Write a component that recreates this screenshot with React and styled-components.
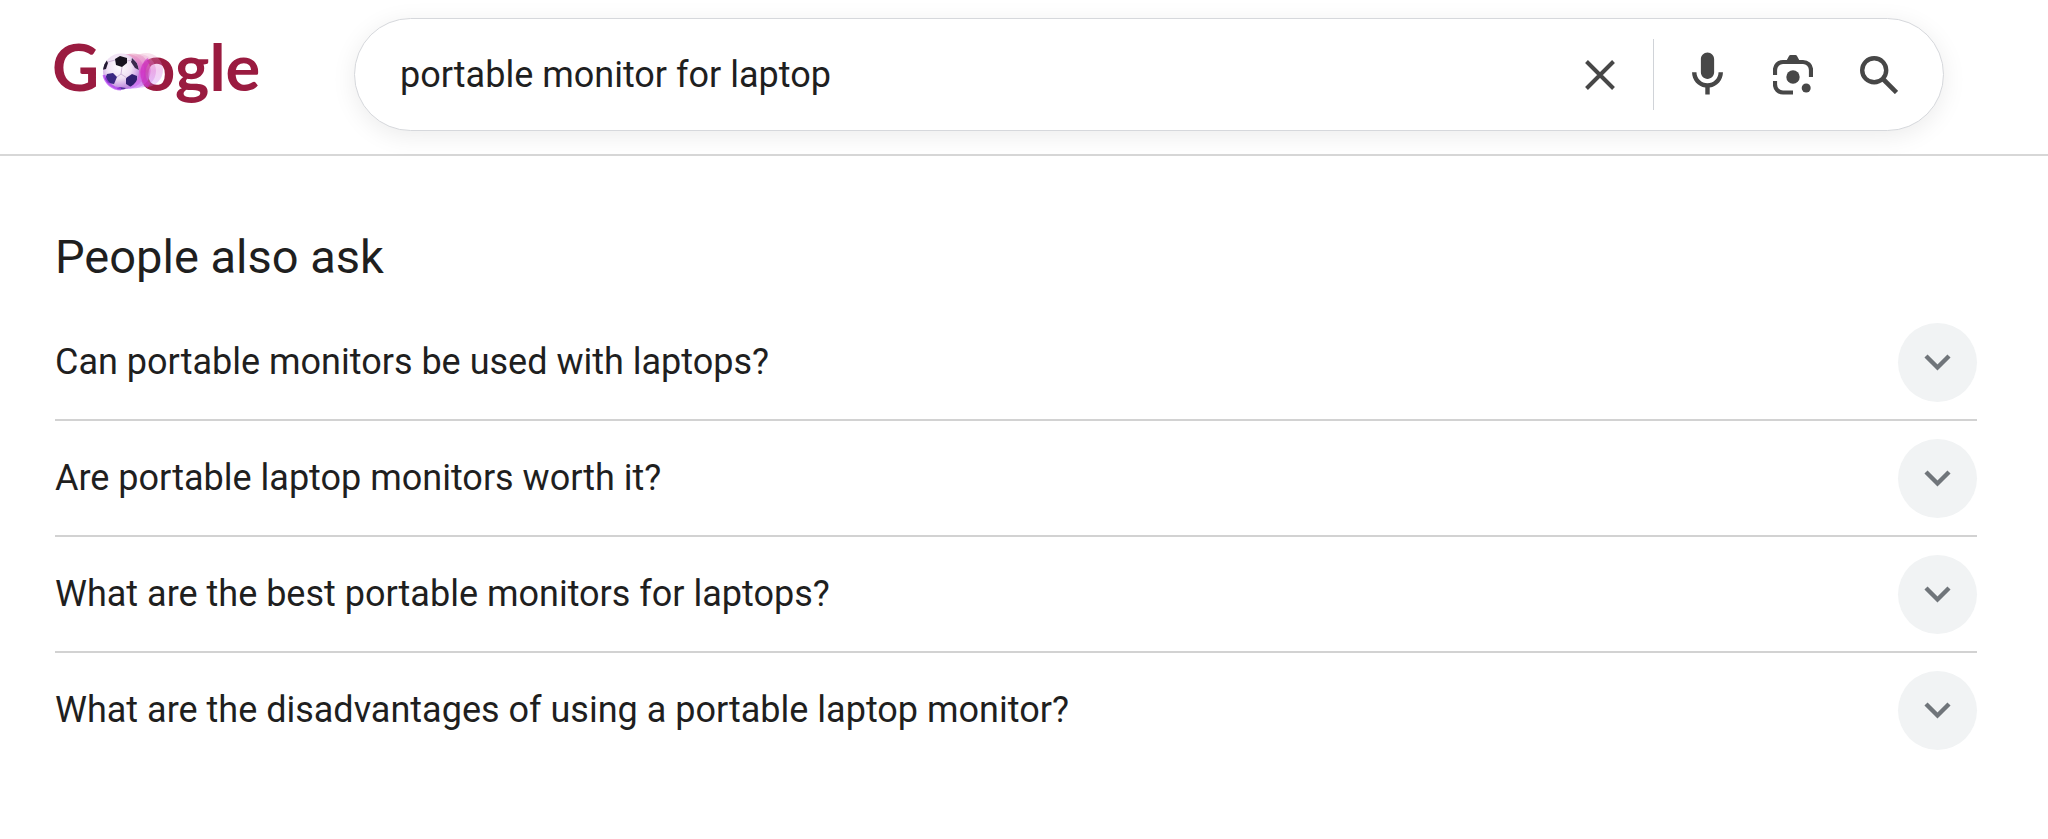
import React, { useRef, useState } from "react";
import styled, { createGlobalStyle } from "styled-components";

const GlobalStyle = createGlobalStyle`
  * {
    box-sizing: border-box;
  }
  body {
    margin: 0;
    background: #fff;
    color: #1f1f1f;
    font-family: Roboto, "Liberation Sans", sans-serif;
  }
`;

const Header = styled.header`
  display: flex;
  align-items: center;
  gap: 91px;
  padding: 18px 104px 23px 51px;
  border-bottom: 2px solid #d7d7d7;
`;

const LogoLink = styled.a`
  display: flex;
  flex: none;
`;

const LogoLetters = styled.text`
  fill: #9a1b40;
  font-family: Lato, sans-serif;
  font-size: 65px;
  font-weight: 700;
`;

const SearchForm = styled.form`
  flex: 1;
  min-width: 0;
  height: 113px;
  display: flex;
  align-items: center;
  padding: 0 21px 0 45px;
  border: 1px solid #d6d8dc;
  border-radius: 57px;
  background: #fff;
  box-shadow: 0 5px 25px rgba(0, 0, 0, 0.08);
`;

const SearchInput = styled.input`
  flex: 1;
  min-width: 0;
  padding: 0;
  border: 0;
  outline: 0;
  background: transparent;
  color: #1f1f1f;
  font-family: inherit;
  font-size: 36px;
  line-height: 48px;
`;

const IconButton = styled.button`
  flex: none;
  width: 86px;
  height: 86px;
  display: flex;
  align-items: center;
  justify-content: center;
  padding: 0;
  border: 0;
  background: transparent;
  color: #474747;
  cursor: pointer;
`;

const Divider = styled.span`
  flex: none;
  width: 1px;
  height: 71px;
  margin: 0 10px;
  background: #d0d3d8;
`;

const Main = styled.main`
  padding: 73px 71px 72px 55px;
`;

const Title = styled.h2`
  margin: 0 0 20px;
  font-size: 47px;
  font-weight: 400;
  line-height: 56px;
`;

const QuestionList = styled.ul`
  margin: 0;
  padding: 0;
  list-style: none;
`;

const QuestionItem = styled.li`
  border-bottom: 2px solid #d2d2d2;

  &:last-child {
    border-bottom: 0;
  }
`;

const QuestionButton = styled.button`
  width: 100%;
  min-height: 114px;
  display: flex;
  align-items: center;
  justify-content: space-between;
  gap: 24px;
  padding: 0;
  border: 0;
  background: transparent;
  color: inherit;
  font-family: inherit;
  font-size: 36px;
  line-height: 48px;
  text-align: left;
  cursor: pointer;
`;

const Chevron = styled.span`
  flex: none;
  width: 79px;
  height: 79px;
  display: flex;
  align-items: center;
  justify-content: center;
  border-radius: 50%;
  background: #f1f3f4;
  color: #70757a;
  transform: ${({ $open }) => ($open ? "rotate(180deg)" : "none")};
`;

const questions = [
  "Can portable monitors be used with laptops?",
  "Are portable laptop monitors worth it?",
  "What are the best portable monitors for laptops?",
  "What are the disadvantages of using a portable laptop monitor?",
];

const Logo = () => (
  <svg width="212" height="98" viewBox="-4 -14 212 98" aria-hidden="true">
    <defs>
      <radialGradient id="ball" cx="0.45" cy="0.35" r="0.7">
        <stop offset="0" stopColor="#fff" />
        <stop offset="0.5" stopColor="#efe0f3" />
        <stop offset="1" stopColor="#b070d8" />
      </radialGradient>
      <linearGradient id="trail" x1="0" y1="0" x2="0" y2="1">
        <stop offset="0" stopColor="#eba6c4" />
        <stop offset="0.5" stopColor="#d65ad0" />
        <stop offset="1" stopColor="#c67cfa" />
      </linearGradient>
      <clipPath id="ballClip">
        <circle cx="66" cy="31.500" r="18" />
      </clipPath>
    </defs>
    <LogoLetters x="-3" y="51">G</LogoLetters>
    <LogoLetters x="83" y="51">ogle</LogoLetters>
    <circle cx="91" cy="30" r="17" fill="url(#trail)" opacity="0.3" />
    <circle cx="84" cy="31" r="17" fill="url(#trail)" opacity="0.3" />
    <circle cx="78" cy="31" r="17.500" fill="url(#trail)" opacity="0.6" />
    <circle cx="72" cy="31.500" r="17.500" fill="url(#trail)" opacity="0.8" />
    <path d="M94 20a17 17 0 0 0 0 26" stroke="#cf28c4" strokeWidth="5" fill="none" opacity="0.6" />
    <circle cx="66" cy="31.500" r="18" fill="url(#ball)" />
    <g clipPath="url(#ballClip)">
      <path d="M60 19l5-3 7 2 0 5-5 4-6-2z" fill="#17131f" />
      <path d="M77 18l5 5 2 7-4-2-4-6z" fill="#3b2a4d" />
      <path d="M47 24l4-5 2 4-2 6-4 1z" fill="#241b33" />
      <path d="M52 34l6-1 4 4-3 7-6-1-3-4z" fill="#3b2882" />
      <path d="M71 38l6-4 5 2 0 7-6 4-5-3z" fill="#30206f" />
      <path d="M60 49l5-2 6 1-4 3z" fill="#53309c" />
      <path
        d="M53 22l7-2M67 27l-1 7M72 21l5-1M66 34l-4 3M66 34l6 4M59 44l3 5"
        stroke="#cdb4d8"
        fill="none"
      />
    </g>
    <path
      d="M49 35a17.500 17.500 0 0 0 17 14"
      stroke="#b43cf2"
      strokeWidth="3"
      fill="none"
      opacity="0.7"
    />
  </svg>
);

const CloseIcon = () => (
  <svg width="32" height="32" viewBox="0 0 32 32" aria-hidden="true">
    <path d="M2.500 2.500l27 27M29.500 2.500l-27 27" stroke="currentColor" strokeWidth="4" />
  </svg>
);

const MicIcon = () => (
  <svg width="53" height="53" viewBox="0 0 24 24" fill="currentColor" aria-hidden="true">
    <path d="M12 14c1.660 0 3-1.340 3-3V5c0-1.660-1.340-3-3-3S9 3.340 9 5v6c0 1.660 1.340 3 3 3zm5-3c0 2.760-2.240 5-5 5s-5-2.240-5-5H5c0 3.530 2.610 6.430 6 6.920V21h2v-3.080c3.390-.49 6-3.390 6-6.920h-2z" />
  </svg>
);

const LensIcon = () => (
  <svg width="40" height="40" viewBox="0 0 40 40" aria-hidden="true">
    <path
      d="M2 20v-5a8 8 0 0 1 8-8h20a8 8 0 0 1 8 8v7M2 26v3.500a8 8 0 0 0 8 8h10"
      stroke="currentColor"
      strokeWidth="4.200"
      fill="none"
    />
    <path d="M13 6.500L16 1q.5-1 1.500-1h5q1 0 1.500 1l3 5.500z" fill="currentColor" />
    <circle cx="20" cy="22" r="6.700" fill="currentColor" />
    <circle cx="33.200" cy="33" r="4.500" fill="currentColor" />
  </svg>
);

const SearchIcon = () => (
  <svg width="38" height="38" viewBox="0 0 38 38" aria-hidden="true">
    <circle cx="14.200" cy="14.200" r="12" stroke="currentColor" strokeWidth="4.400" fill="none" />
    <path d="M22.500 22.500l14 14" stroke="currentColor" strokeWidth="4.600" />
  </svg>
);

const ChevronIcon = () => (
  <svg width="27" height="17" viewBox="0 0 27 17" aria-hidden="true">
    <path d="M2 2l11.500 11.500L25 2" stroke="currentColor" strokeWidth="4.400" fill="none" />
  </svg>
);

const Question = ({ text }) => {
  const [open, setOpen] = useState(false);

  return (
    <QuestionItem>
      <QuestionButton type="button" aria-expanded={open} onClick={() => setOpen(!open)}>
        <span>{text}</span>
        <Chevron $open={open}>
          <ChevronIcon />
        </Chevron>
      </QuestionButton>
    </QuestionItem>
  );
};

export default function App() {
  const [query, setQuery] = useState("portable monitor for laptop");
  const inputRef = useRef(null);

  const clear = () => {
    setQuery("");
    inputRef.current.focus();
  };

  return (
    <>
      <GlobalStyle />
      <Header>
        <LogoLink href="#" aria-label="Google home">
          <Logo />
        </LogoLink>
        <SearchForm role="search" onSubmit={(e) => e.preventDefault()}>
          <SearchInput
            ref={inputRef}
            type="text"
            aria-label="Search"
            spellCheck={false}
            value={query}
            onChange={(e) => setQuery(e.target.value)}
          />
          <IconButton type="button" aria-label="Clear" onClick={clear}>
            <CloseIcon />
          </IconButton>
          <Divider />
          <IconButton type="button" aria-label="Search by voice">
            <MicIcon />
          </IconButton>
          <IconButton type="button" aria-label="Search by image">
            <LensIcon />
          </IconButton>
          <IconButton type="submit" aria-label="Search">
            <SearchIcon />
          </IconButton>
        </SearchForm>
      </Header>
      <Main>
        <Title>People also ask</Title>
        <QuestionList>
          {questions.map((text) => (
            <Question key={text} text={text} />
          ))}
        </QuestionList>
      </Main>
    </>
  );
}
